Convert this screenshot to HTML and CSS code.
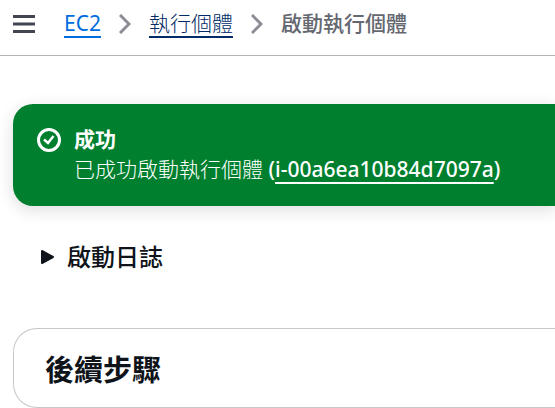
FILE: index.html
```html
<!DOCTYPE html>
<html lang="zh-Hant">
<head>
<meta charset="utf-8">
<meta name="viewport" content="width=device-width, initial-scale=1">
<title>啟動執行個體</title>
<link rel="stylesheet" href="styles.css">
</head>
<body>
<header class="topbar">
  <button class="menu" type="button" aria-label="選單">
    <svg width="22" height="20" viewBox="0 0 22 20" fill="none" stroke="#424650" stroke-width="3"><path d="M0 2.500h22M0 10h22M0 17.500h22"/></svg>
  </button>
  <nav aria-label="導覽">
    <ol class="crumbs">
      <li><a class="crumb-link" href="#">EC2</a></li>
      <li>
        <svg class="chevron" width="12" height="20" viewBox="0 0 12 20" fill="none" stroke="#8c8c94" stroke-width="3"><path d="M1 1l9 9-9 9"/></svg>
        <a class="crumb-link crumb-hover" href="#">執行個體</a>
      </li>
      <li>
        <svg class="chevron" width="12" height="20" viewBox="0 0 12 20" fill="none" stroke="#8c8c94" stroke-width="3"><path d="M1 1l9 9-9 9"/></svg>
        <span class="crumb-current" aria-current="page">啟動執行個體</span>
      </li>
    </ol>
  </nav>
</header>
<main class="content">
  <section class="flash" role="status">
    <svg class="flash-icon" width="24" height="24" viewBox="0 0 24 24" fill="none" stroke="#fff" stroke-width="3"><circle cx="12" cy="12" r="10.500"/><path d="M7 11.500l4 3.500 5.500-7" stroke-width="2.500"/></svg>
    <div class="flash-text">
      <h2 class="flash-title">成功</h2>
      <p class="flash-message">已成功啟動執行個體 <span class="instance">(<a class="instance-link" href="#">i-00a6ea10b84d7097a</a>)</span></p>
    </div>
  </section>
  <button class="expander" type="button" aria-expanded="false">
    <svg width="13" height="16" viewBox="0 0 13 16" fill="#0f141a" stroke="#0f141a" stroke-width="2" stroke-linejoin="round"><path d="M1 2v12l11-6z"/></svg>
    啟動日誌
  </button>
  <section class="panel">
    <h2 class="panel-title">後續步驟</h2>
  </section>
</main>
</body>
</html>
```
FILE: styles.css
```css
* {
  box-sizing: border-box;
}

body {
  margin: 0;
  background: #fff;
  color: #0f141a;
  font-family: "Noto Sans", "Noto Sans CJK TC", sans-serif;
  font-size: 21px;
  line-height: 30px;
}

h2,
p,
ol {
  margin: 0;
  padding: 0;
}

button {
  border: 0;
  padding: 0;
  background: none;
  color: inherit;
  font: inherit;
  cursor: pointer;
}

svg {
  display: block;
  flex: none;
}

.topbar {
  display: flex;
  align-items: center;
  gap: 29px;
  height: 56px;
  padding: 0 13px 8px;
  border-bottom: 1px solid #b4b4b8;
}

.crumbs {
  padding-bottom: 2px;
}

.crumbs,
.crumbs li {
  display: flex;
  align-items: center;
  gap: 18px;
  list-style: none;
  white-space: nowrap;
}

.chevron {
  margin-top: 2px;
}

.crumb-link {
  color: #006ce0;
  text-decoration: underline 2px;
  text-decoration-skip-ink: none;
  text-underline-offset: 5px;
}

.crumb-hover {
  color: #002b66;
  font-weight: 300;
}

.crumb-current {
  color: #656871;
  font-weight: 500;
}

.content {
  padding: 48px 0 0 13px;
}

.flash {
  display: flex;
  gap: 13px;
  padding: 20px 24px 22px;
  border-radius: 20px 0 0 20px;
  background: #00802f;
  color: #fff;
  box-shadow: 0 4px 16px 1px rgba(0, 7, 22, 0.12);
}

.flash-icon {
  margin-top: 4px;
}

.flash-title {
  font-size: 21px;
  font-weight: 700;
}

.instance {
  font-weight: 500;
}

.instance-link {
  color: inherit;
  text-decoration: underline 2px;
  text-decoration-skip-ink: none;
  text-underline-offset: 5px;
}

.flash-message {
  font-weight: 300;
}

.expander {
  display: flex;
  align-items: center;
  gap: 13px;
  margin: 35px 0 0 28px;
  font-size: 24px;
  font-weight: 500;
  line-height: 32px;
}

.panel {
  margin-top: 55px;
  padding: 21px 31px 18px;
  border: 1px solid #c6c6cd;
  border-right: 0;
  border-radius: 24px 0 0 24px;
}

.panel-title {
  font-size: 29px;
  font-weight: 700;
  line-height: 39px;
}
```
